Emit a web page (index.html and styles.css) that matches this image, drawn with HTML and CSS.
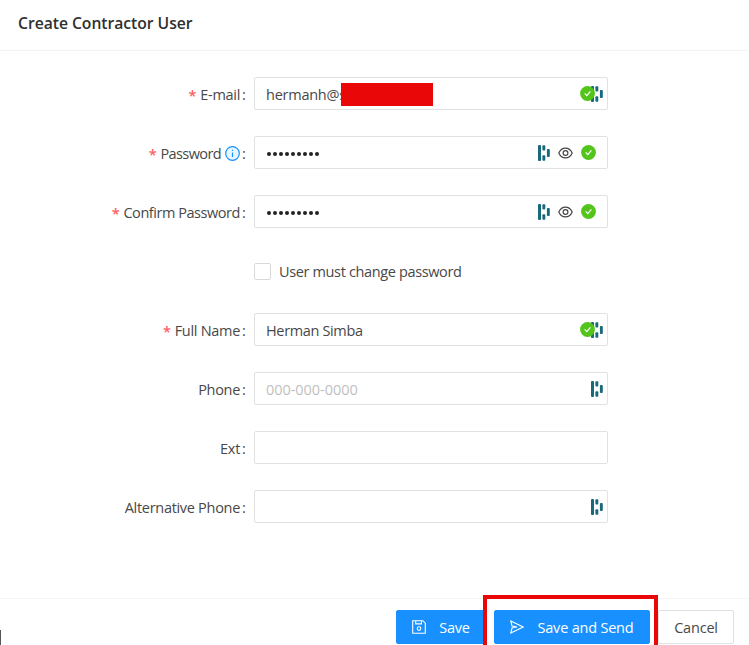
FILE: index.html
```
<!DOCTYPE html>
<html lang="en">
<head>
<meta charset="utf-8">
<title>Create Contractor User</title>
<link rel="stylesheet" href="styles.css">
</head>
<body>
<svg class="defs" aria-hidden="true">
  <symbol id="vault" viewBox="0 0 12 16"><g fill="#17697b"><rect x="0" y="0" width="3" height="16" rx=".9"/><rect x="4.4" y="0.3" width="2.9" height="5.2" rx=".9"/><rect x="4.4" y="10.3" width="2.9" height="5.4" rx=".9"/><rect x="8.9" y="4" width="2.9" height="8" rx=".9"/></g></symbol>
  <symbol id="check" viewBox="0 0 15 15"><circle cx="7.5" cy="7.5" r="7.4" fill="#52c41a"/><path d="M4.7 7.4l2.1 2.2 3.6-4.3" fill="none" stroke="#fff" stroke-width="1.2"/></symbol>
  <symbol id="eye" viewBox="0 0 15 12"><g fill="none" stroke="#444" stroke-width="1.2"><path d="M.8 6Q3 1.1 7.5 1.1T14.2 6Q12 10.9 7.5 10.9T.8 6z"/><circle cx="7.5" cy="6" r="2.4"/></g></symbol>
</svg>
<main class="modal">
  <header class="header"><h1>Create Contractor User</h1></header>
  <form class="form">
    <div class="row"><label class="label"><i class="req">*</i><span>E-mail</span><b>:</b></label>
      <div class="field"><span class="value email">hermanh@s</span><span class="redaction"></span><span class="icons"><svg class="check over"><use href="#check"/></svg><svg class="vault"><use href="#vault"/></svg></span></div></div>
    <div class="row"><label class="label"><i class="req">*</i><span class="tight">Password</span><svg class="info" viewBox="0 0 15 15"><circle cx="7.5" cy="7.5" r="6.8" fill="#e6f7ff" stroke="#1890ff" stroke-width="1.2"/><path d="M7.5 6.4v4.7M7.5 3.7v1.4" stroke="#1890ff" stroke-width="1.2"/></svg><b>:</b></label>
      <div class="field"><span class="dots"><i></i><i></i><i></i><i></i><i></i><i></i><i></i><i></i><i></i></span><span class="icons wide"><svg class="vault"><use href="#vault"/></svg><svg class="eye"><use href="#eye"/></svg><svg class="check"><use href="#check"/></svg></span></div></div>
    <div class="row"><label class="label"><i class="req">*</i><span class="snug">Confirm Password</span><b>:</b></label>
      <div class="field"><span class="dots"><i></i><i></i><i></i><i></i><i></i><i></i><i></i><i></i><i></i></span><span class="icons wide"><svg class="vault"><use href="#vault"/></svg><svg class="eye"><use href="#eye"/></svg><svg class="check"><use href="#check"/></svg></span></div></div>
    <div class="row"><span class="label"></span><label class="option"><span class="box"></span><span>User must change password</span></label></div>
    <div class="row"><label class="label"><i class="req">*</i><span>Full Name</span><b>:</b></label>
      <div class="field"><span class="value">Herman Simba</span><span class="icons"><svg class="check over"><use href="#check"/></svg><svg class="vault"><use href="#vault"/></svg></span></div></div>
    <div class="row"><label class="label"><span>Phone</span><b>:</b></label>
      <div class="field"><span class="value placeholder">000-000-0000</span><span class="icons"><svg class="vault"><use href="#vault"/></svg></span></div></div>
    <div class="row"><label class="label"><span>Ext</span><b>:</b></label><div class="field"></div></div>
    <div class="row"><label class="label"><span>Alternative Phone</span><b>:</b></label>
      <div class="field"><span class="icons"><svg class="vault"><use href="#vault"/></svg></span></div></div>
  </form>
  <footer class="footer">
    <span class="caret"></span>
    <button class="btn primary save"><svg viewBox="0 0 14 14"><path d="M.7.7h10.1l2.5 2.5v10.1H.7zM3.7.7v3.2h5.8V.7"/><circle cx="7" cy="8.6" r="1.8"/></svg><span>Save</span></button>
    <button class="btn primary send"><svg viewBox="0 0 14 14"><path d="M.8 1l12.4 6L.8 13l1.2-5 5-1-5-1z"/></svg><span>Save and Send</span></button>
    <button class="btn cancel"><span>Cancel</span></button>
    <span class="highlight"></span>
  </footer>
</main>
</body>
</html>
```

FILE: styles.css
```
* { box-sizing: border-box; }
body { margin: 0; background: #fff; overflow: hidden; font: 14.5px/20px "Open Sans", "Noto Sans", sans-serif; letter-spacing: -0.2px; color: #484848; }
svg { display: block; flex: none; }
.defs { position: absolute; width: 0; height: 0; }
.modal { width: 749px; height: 645px; display: flex; flex-direction: column; overflow: hidden; }
.header { height: 51px; flex: none; padding: 13px 18px 0; border-bottom: 1px solid #f3f3f3; }
h1 { margin: 0; font-size: 15.7px; line-height: 20px; font-weight: 600; letter-spacing: -0.03px; color: #303030; }
.form { flex: none; height: 547px; padding-top: 26px; display: flex; flex-direction: column; gap: 25px; }
.row { height: 34px; flex: none; display: flex; align-items: flex-start; }
.label { width: 254px; height: 34px; padding: 1px 8px 0 0; display: flex; justify-content: flex-end; align-items: center; white-space: nowrap; letter-spacing: -0.3px; }
.label b { font-weight: 400; width: 4px; margin-left: 2px; }
.tight { letter-spacing: -0.6px; }
.snug { letter-spacing: -0.45px; }
.req { color: #ff5c5e; font-style: normal; font-weight: 600; margin-right: 4px; height: 18px; }
.info { width: 15px; height: 15px; margin: -1px 0 0 4px; }
.field { position: relative; width: 354px; height: 33px; border: 1px solid #e1e1e1; border-radius: 2px; padding: 0 4px 0 11px; display: flex; align-items: center; }
.value { padding-top: 2px; white-space: nowrap; letter-spacing: -0.35px; }
.email { letter-spacing: -0.25px; }
.placeholder { color: #bfbfbf; letter-spacing: -0.05px; }
.redaction { position: absolute; left: 86px; top: 5px; width: 92px; height: 23px; background: #ea0707; }
.icons { margin-left: auto; display: flex; align-items: center; }
.wide { gap: 8px; padding-right: 7px; }
.vault { width: 12px; height: 16px; }
.eye { width: 15px; height: 12px; }
.check { width: 15px; height: 15px; }
.over { position: relative; z-index: 1; margin-right: -4px; }
.dots { display: flex; gap: 2px; padding-left: 1px; }
.dots i { width: 4px; height: 4px; margin-top: 3px; border-radius: 50%; background: #222; }
.option { height: 34px; display: flex; align-items: center; gap: 8px; letter-spacing: -0.36px; }
.option span:last-child { padding-top: 1px; }
.box { width: 17px; height: 17px; border: 1px solid #d9d9d9; border-radius: 2px; }
.footer { position: relative; flex: none; height: 47px; padding: 11px 14px 0 0; border-top: 1px solid #f4f4f4; display: flex; }
.caret { width: 1px; height: 16px; margin: 20px 395px 0 0; background: #555; }
.btn { flex: none; height: 34px; padding: 2px 0 0; border: 1px solid #1890ff; border-radius: 2px; font: inherit; letter-spacing: inherit; display: flex; justify-content: center; align-items: center; gap: 13px; white-space: nowrap; }
.btn svg { width: 14px; height: 14px; margin-top: -2px; fill: none; stroke: #fff; stroke-width: 1.1; }
.primary { background: #1890ff; color: #fff; }
.save { width: 90px; margin-right: 8px; }
.send { width: 156px; margin-right: 8px; }
.cancel { width: 76px; border-color: #e1e1e1; background: #fff; color: #484848; }
.highlight { position: absolute; left: 483px; top: -4px; width: 175px; height: 60px; border: 4px solid #ea0707; }
```
